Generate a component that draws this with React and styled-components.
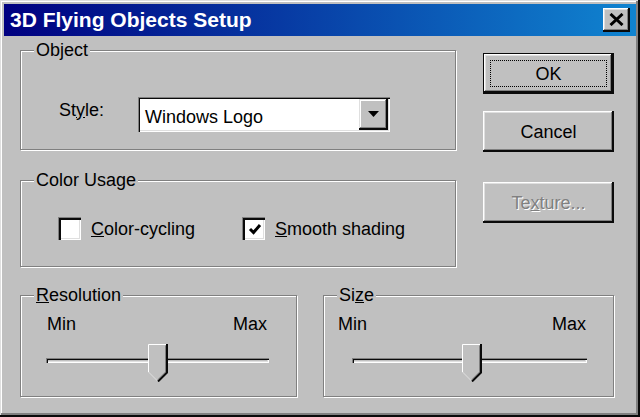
import React from "react";
import styled, { createGlobalStyle } from "styled-components";

const GlobalStyle = createGlobalStyle`
  html, body {
    margin: 0;
    padding: 0;
    background: #c0c0c0;
  }
  body {
    font-family: "Liberation Sans", Arial, sans-serif;
    font-size: 18px;
    color: #000;
  }
`;

const Window = styled.div`
  width: 640px;
  height: 417px;
  box-sizing: border-box;
  padding: 4px;
  background: #c0c0c0;
  box-shadow: inset -2px -2px #0a0a0a, inset 1px 1px #dfdfdf,
    inset -4px -4px #808080, inset 2px 2px #fff;
  display: flex;
  flex-direction: column;
`;

const TitleBar = styled.div`
  height: 32px;
  flex-shrink: 0;
  display: flex;
  align-items: center;
  justify-content: space-between;
  padding: 0 6px;
  background: linear-gradient(90deg, #000080, #1084d0);
`;

const TitleText = styled.span`
  color: #fff;
  font-weight: bold;
  font-size: 21px;
  line-height: 24px;
  white-space: nowrap;
`;

const CloseButton = styled.div`
  width: 27px;
  height: 24px;
  background: #c0c0c0;
  box-shadow: inset -2px -2px #0a0a0a, inset 1px 1px #fff,
    inset -3px -3px #808080, inset 2px 2px #dfdfdf;
  display: flex;
  align-items: center;
  justify-content: center;
  padding-bottom: 1px;
  box-sizing: border-box;
`;

const Body = styled.div`
  padding: 14px 22px 0 16px;
  display: flex;
  flex-direction: column;
`;

const TopRow = styled.div`
  display: flex;
  gap: 27px;
`;

const LeftColumn = styled.div`
  width: 436px;
  display: flex;
  flex-direction: column;
  gap: 30px;
`;

const ButtonColumn = styled.div`
  width: 131px;
  padding-top: 3px;
  display: flex;
  flex-direction: column;
`;

const Group = styled.div`
  position: relative;
  box-sizing: border-box;
  width: ${(p) => p.$w}px;
  height: ${(p) => p.$h}px;
  padding: ${(p) => p.$pad || "0"};
  border: 1px solid #808080;
  box-shadow: inset 1px 1px #fff, 1px 1px #fff;
`;

const Caption = styled.span`
  position: absolute;
  top: -11px;
  left: 13px;
  padding: 0 2px;
  line-height: 20px;
  background: #c0c0c0;
  white-space: nowrap;
`;

const FieldRow = styled.div`
  display: flex;
  align-items: center;
`;

const FieldLabel = styled.span`
  width: 79px;
  line-height: 20px;
  margin-bottom: 10px;
`;

const Combo = styled.div`
  width: 252px;
  height: 35px;
  box-sizing: border-box;
  padding: 2px;
  background: #fff;
  box-shadow: inset 1px 1px #808080, inset 2px 2px #0a0a0a,
    inset -1px -1px #fff, inset -2px -2px #dfdfdf;
  display: flex;
`;

const ComboValue = styled.span`
  flex: 1;
  padding: 5px 0 0 5px;
  display: flex;
  align-items: center;
  white-space: nowrap;
`;

const DropButton = styled.div`
  width: 29px;
  background: #c0c0c0;
  box-shadow: inset -2px -2px #0a0a0a, inset 1px 1px #dfdfdf,
    inset -3px -3px #808080, inset 2px 2px #fff;
  display: flex;
  align-items: center;
  justify-content: center;
`;

const CheckRow = styled.div`
  display: flex;
  align-items: center;
  gap: 47px;
`;

const CheckItem = styled.label`
  display: flex;
  align-items: center;
  gap: 10px;
  line-height: 20px;
  white-space: nowrap;
`;

const Box = styled.span`
  width: 23px;
  height: 23px;
  background: #fff;
  box-shadow: inset 1px 1px #808080, inset 3px 3px #0a0a0a,
    inset -1px -1px #fff, inset -2px -2px #dfdfdf;
  display: flex;
  align-items: center;
  justify-content: center;
  padding: 2px 0 0 2px;
  box-sizing: border-box;
`;

const Button = styled.div`
  box-sizing: border-box;
  height: ${(p) => p.$h || 41}px;
  margin-top: ${(p) => p.$mt || 0}px;
  padding: ${(p) => (p.$default ? "6px" : "0")};
  border: ${(p) => (p.$default ? "1px solid #0a0a0a" : "none")};
  background: #c0c0c0;
  box-shadow: inset -2px -2px #0a0a0a, inset 1px 1px #fff,
    inset -3px -3px #808080, inset 2px 2px #dfdfdf;
  display: flex;
  align-items: stretch;
  justify-content: center;
  color: ${(p) => (p.$disabled ? "#808080" : "#000")};
  text-shadow: ${(p) => (p.$disabled ? "1px 1px #fff" : "none")};
`;

const ButtonFace = styled.span`
  flex: 1;
  display: flex;
  align-items: center;
  justify-content: center;
  line-height: 20px;
  border: ${(p) => (p.$focus ? "1px dotted #000" : "none")};
`;

const BottomRow = styled.div`
  display: flex;
  gap: 26px;
  margin-top: 28px;
`;

const Scale = styled.div`
  display: flex;
  justify-content: space-between;
  margin: 18px ${(p) => p.$r}px 0 ${(p) => p.$l}px;
  line-height: 20px;
`;

const Slider = styled.div`
  position: relative;
  height: 38px;
  margin-top: 10px;
  padding-top: 14px;
  box-sizing: border-box;
`;

const Track = styled.div`
  height: 5px;
  background: #c0c0c0;
  box-shadow: inset 1px 1px #808080, inset 2px 2px #0a0a0a,
    inset -1px -1px #fff, inset -2px -2px #dfdfdf;
`;

const Thumb = styled.svg`
  position: absolute;
  top: 0;
  display: block;
`;

const CloseIcon = () => (
  <svg width="15" height="13" viewBox="0 0 15 13">
    <path d="M1.5 1 L13.5 12 M13.5 1 L1.5 12" stroke="#000" strokeWidth="3" />
  </svg>
);

const Arrow = () => (
  <svg width="11" height="7" viewBox="0 0 11 7">
    <path d="M0 0 H11 L5.5 6 Z" fill="#000" />
  </svg>
);

const Check = () => (
  <svg width="14" height="13" viewBox="0 0 14 13">
    <path d="M2 6 L5.5 9.5 L12 2" stroke="#000" strokeWidth="3" fill="none" />
  </svg>
);

const SliderControl = ({ value }) => (
  <Slider>
    <Track />
    <Thumb
      width="20"
      height="38"
      viewBox="0 0 20 38"
      style={{ left: `calc((100% - 20px) * ${value})` }}
    >
      <polygon points="0,0 20,0 20,28 10,38 0,28" fill="#c0c0c0" />
      <polyline points="0.5,28 0.5,0.5 18,0.5" stroke="#fff" fill="none" />
      <polyline points="0.5,28 10,37.5" stroke="#dfdfdf" fill="none" />
      <polyline points="17.5,1.5 17.5,28 10,35.5" stroke="#808080" fill="none" />
      <polyline points="19,0 19,28.5 10,37.5" stroke="#0a0a0a" strokeWidth="2" fill="none" />
    </Thumb>
  </Slider>
);

const App = () => {
  return (
    <>
      <GlobalStyle />
      <Window>
        <TitleBar>
          <TitleText>3D Flying Objects Setup</TitleText>
          <CloseButton>
            <CloseIcon />
          </CloseButton>
        </TitleBar>
        <Body>
          <TopRow>
            <LeftColumn>
              <Group $w={436} $h={100} $pad="46px 0 0 38px">
                <Caption>Object</Caption>
                <FieldRow>
                  <FieldLabel>
                    St<u>y</u>le:
                  </FieldLabel>
                  <Combo>
                    <ComboValue>Windows Logo</ComboValue>
                    <DropButton>
                      <Arrow />
                    </DropButton>
                  </Combo>
                </FieldRow>
              </Group>
              <Group $w={436} $h={87} $pad="36px 0 0 37px">
                <Caption>Color Usage</Caption>
                <CheckRow>
                  <CheckItem>
                    <Box />
                    <span>
                      <u>C</u>olor-cycling
                    </span>
                  </CheckItem>
                  <CheckItem>
                    <Box>
                      <Check />
                    </Box>
                    <span>
                      <u>S</u>mooth shading
                    </span>
                  </CheckItem>
                </CheckRow>
              </Group>
            </LeftColumn>
            <ButtonColumn>
              <Button $default>
                <ButtonFace $focus>OK</ButtonFace>
              </Button>
              <Button $mt={17}>
                <ButtonFace>Cancel</ButtonFace>
              </Button>
              <Button $mt={30} $disabled>
                <ButtonFace>
                  Te<u>x</u>ture...
                </ButtonFace>
              </Button>
            </ButtonColumn>
          </TopRow>
          <BottomRow>
            <Group $w={277} $h={102} $pad="0 27px 0 25px">
              <Caption>
                <u>R</u>esolution
              </Caption>
              <Scale $l={1} $r={2}>
                <span>Min</span>
                <span>Max</span>
              </Scale>
              <SliderControl value={0.5} />
            </Group>
            <Group $w={291} $h={102} $pad="0 26px 0 28px">
              <Caption>
                Si<u>z</u>e
              </Caption>
              <Scale $l={-14} $r={1}>
                <span>Min</span>
                <span>Max</span>
              </Scale>
              <SliderControl value={0.51} />
            </Group>
          </BottomRow>
        </Body>
      </Window>
    </>
  );
};

export default App;
